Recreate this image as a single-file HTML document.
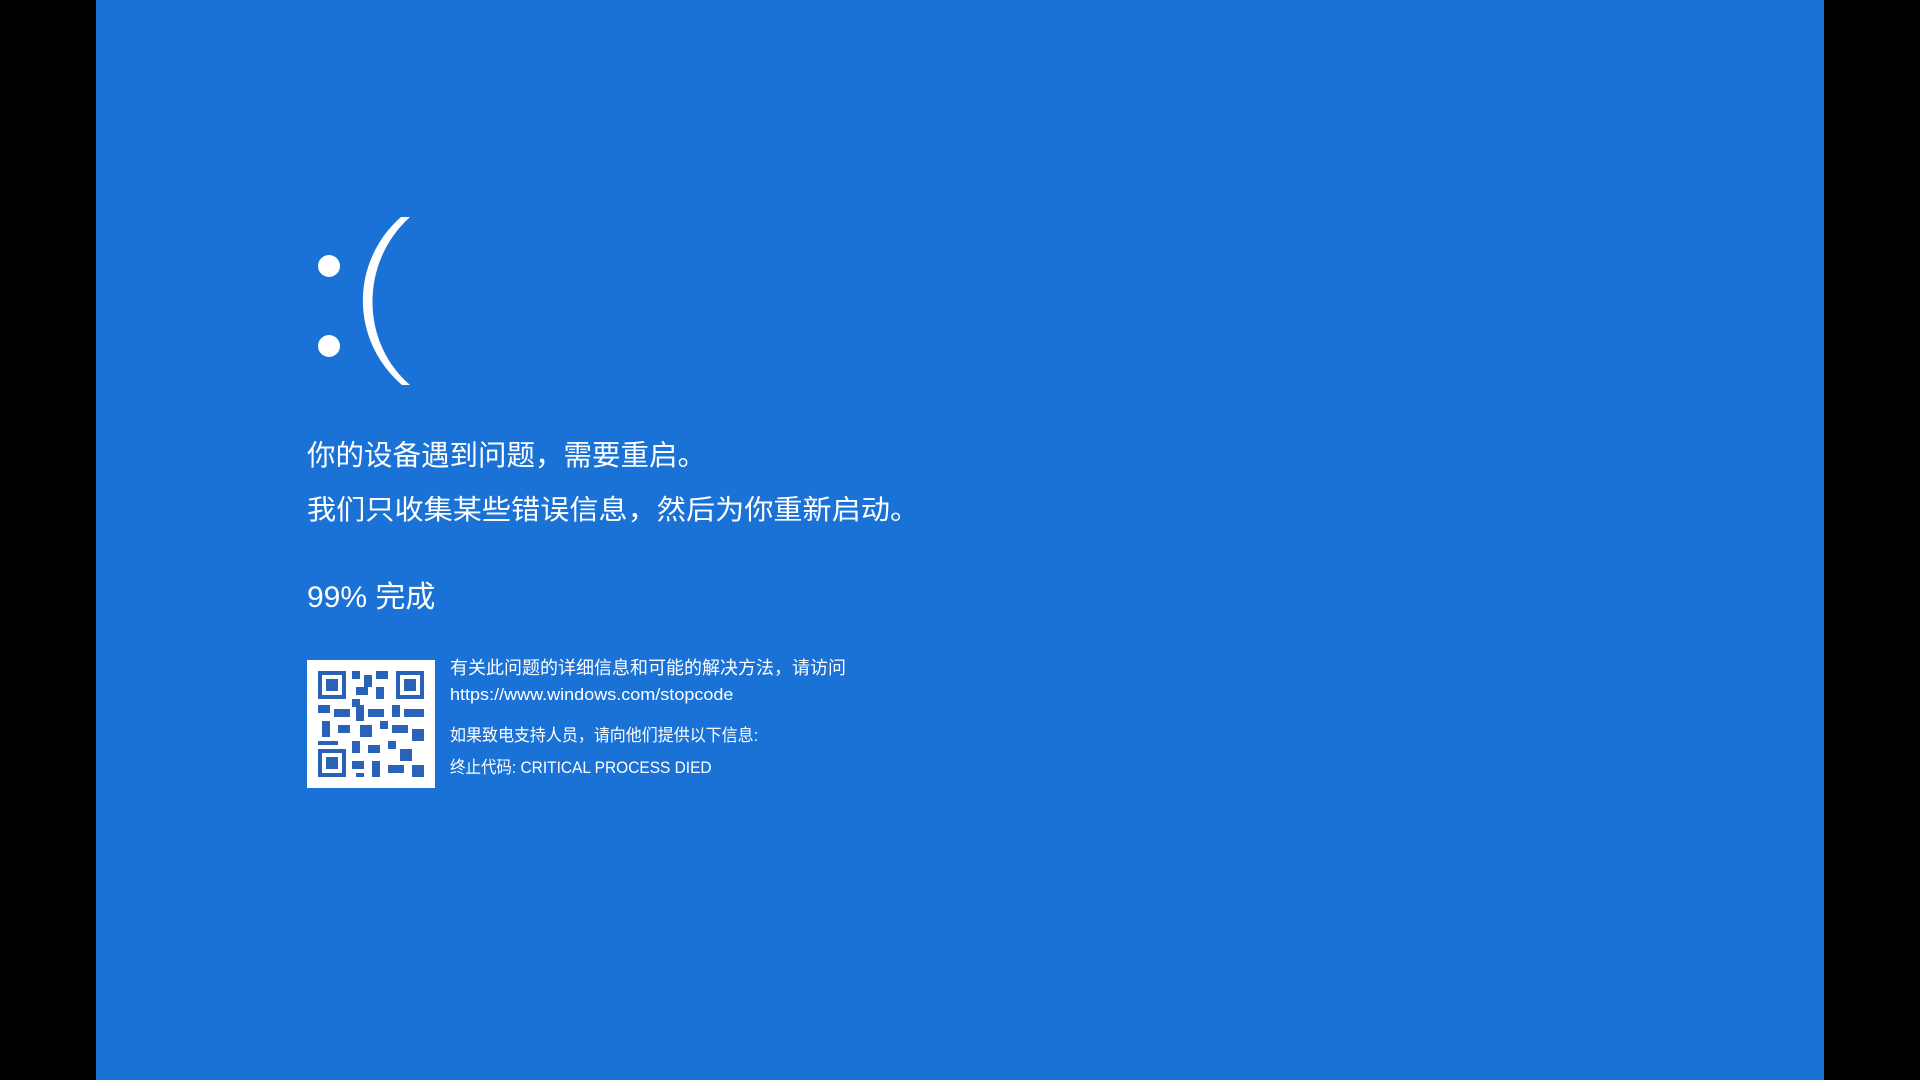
<!DOCTYPE html>
<html><head><meta charset="utf-8"><style>
html,body{margin:0;padding:0;width:1920px;height:1080px;background:#000;overflow:hidden}
#blue{position:absolute;left:96px;top:0;width:1728px;height:1080px;background:#1a72d6}
.t{position:absolute;color:#fff;font-family:"Liberation Sans","Noto Sans CJK SC",sans-serif;white-space:nowrap;transform-origin:0 0}
</style></head><body>
<div id="blue"></div>
<svg style="position:absolute;left:0;top:0" width="1920" height="1080">
<circle cx="329" cy="266" r="11" fill="#fff"/>
<circle cx="329" cy="346" r="11" fill="#fff"/>
<path d="M410 217 C 360 262, 360 342, 410 385 L 402 385 C 350 340, 350 262, 401 217 Z" fill="#fff"/>
<rect x="307" y="660" width="128" height="128" fill="#fff"/>
<g fill="#2a62b8">
<rect x="318" y="671" width="28" height="28"/><rect x="396" y="671" width="28" height="28"/><rect x="318" y="749" width="28" height="28"/>
</g>
<g fill="#fff">
<rect x="322" y="675" width="20" height="20"/><rect x="400" y="675" width="20" height="20"/><rect x="322" y="753" width="20" height="20"/>
</g>
<g fill="#2a62b8">
<rect x="326" y="679" width="12" height="12"/><rect x="404" y="679" width="12" height="12"/><rect x="326" y="757" width="12" height="12"/>
<rect x="352" y="671" width="8" height="8"/><rect x="364" y="675" width="8" height="12"/><rect x="376" y="671" width="12" height="8"/><rect x="356" y="687" width="12" height="8"/><rect x="376" y="687" width="8" height="12"/><rect x="352" y="699" width="8" height="8"/>
<rect x="318" y="705" width="12" height="8"/><rect x="334" y="709" width="16" height="8"/><rect x="356" y="705" width="8" height="16"/><rect x="368" y="709" width="16" height="8"/><rect x="392" y="705" width="8" height="12"/><rect x="404" y="709" width="20" height="8"/>
<rect x="322" y="721" width="8" height="16"/><rect x="338" y="725" width="12" height="8"/><rect x="360" y="725" width="12" height="12"/><rect x="380" y="721" width="8" height="8"/><rect x="392" y="725" width="16" height="8"/><rect x="412" y="729" width="12" height="12"/>
<rect x="318" y="741" width="20" height="4"/><rect x="352" y="741" width="8" height="12"/><rect x="368" y="745" width="12" height="8"/><rect x="388" y="741" width="8" height="8"/><rect x="400" y="749" width="12" height="12"/>
<rect x="352" y="761" width="12" height="8"/><rect x="372" y="761" width="8" height="16"/><rect x="388" y="765" width="16" height="8"/><rect x="412" y="765" width="12" height="12"/><rect x="356" y="773" width="8" height="4"/>
</g>
</svg>
<div class="t" style="left:307px;top:433px;font-size:28.5px">你的设备遇到问题，需要重启。</div>
<div class="t" style="left:307px;top:487px;font-size:27.5px;transform:scaleX(1.06)">我们只收集某些错误信息，然后为你重新启动。</div>
<div class="t" style="left:307px;top:572px;font-size:30px">99% 完成</div>
<div class="t" style="left:450px;top:654px;font-size:18px;transform:scaleX(1.0)">有关此问题的详细信息和可能的解决方法，请访问</div>
<div class="t" style="left:450px;top:685px;font-size:17px;transform:scaleX(1.06)">https://www.windows.com/stopcode</div>
<div class="t" style="left:450px;top:721px;font-size:17px;transform:scaleX(0.94)">如果致电支持人员，请向他们提供以下信息:</div>
<div class="t" style="left:450px;top:753px;font-size:17px;transform:scaleX(0.91)">终止代码: CRITICAL PROCESS DIED</div>
</body></html>
